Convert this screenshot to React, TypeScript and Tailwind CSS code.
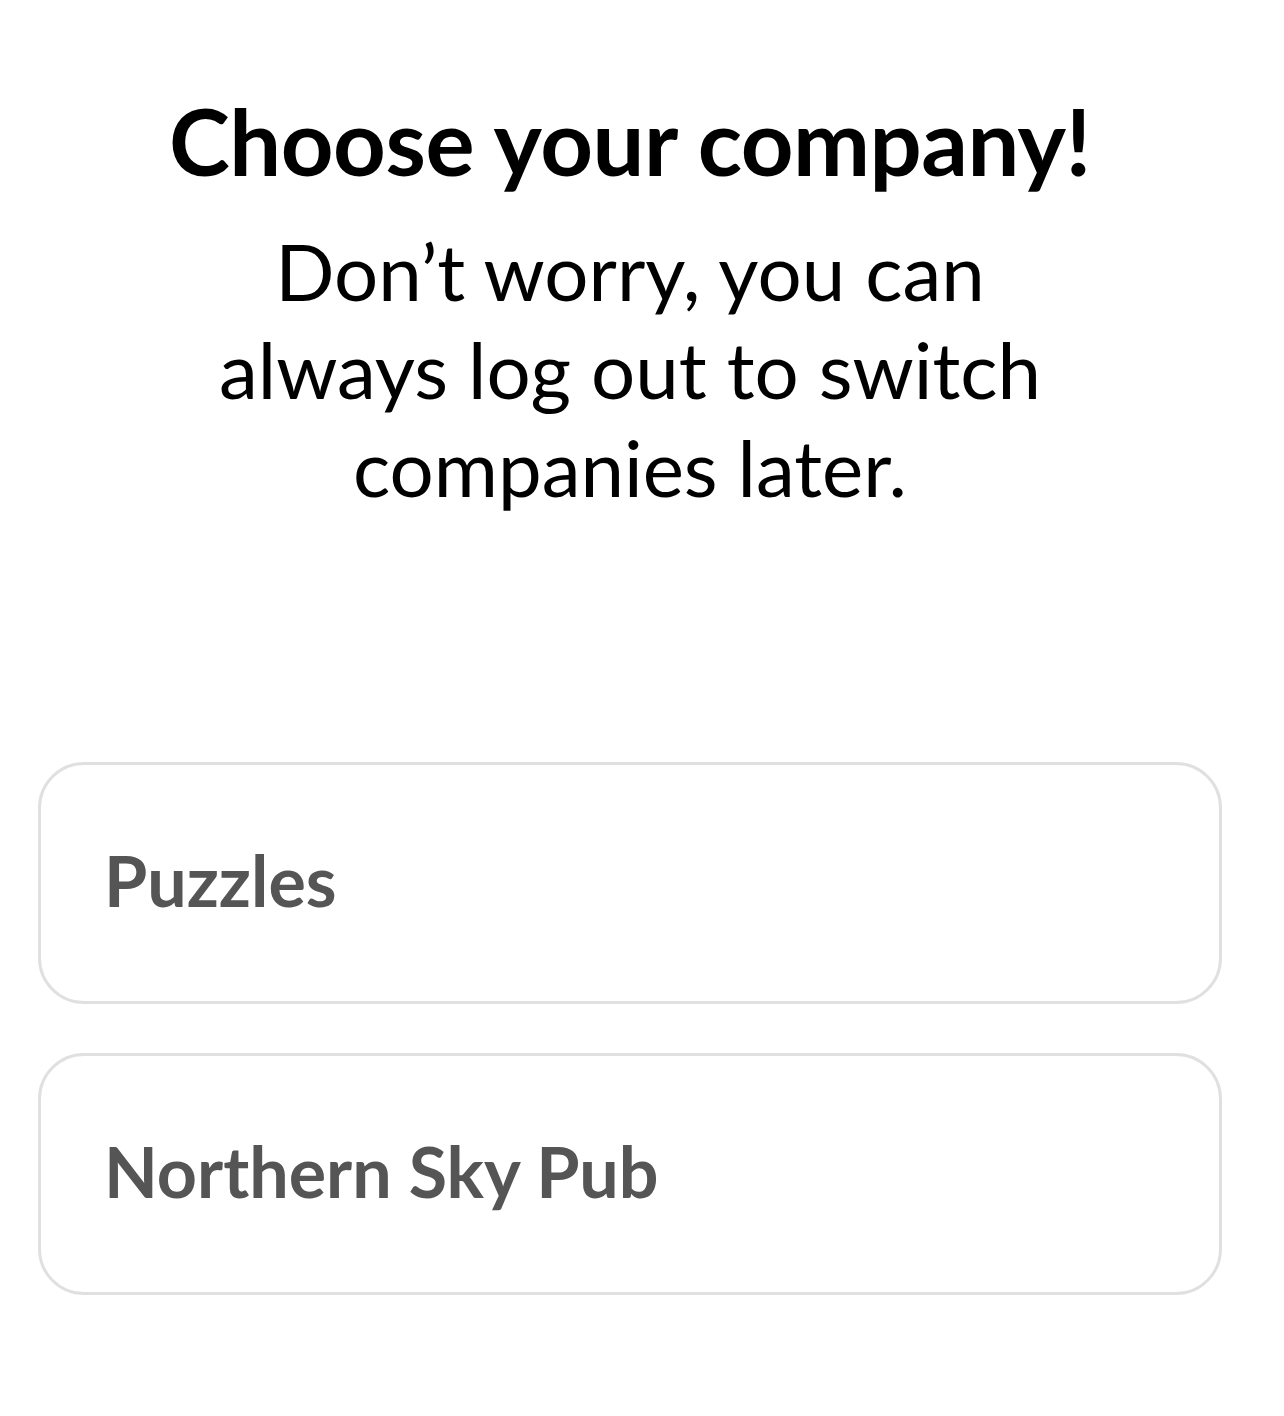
export default function App() {
  const companies = ['Puzzles', 'Northern Sky Pub'];

  return (
    <div className="min-h-[1416px] w-full bg-white font-['Lato','Liberation_Sans',sans-serif]">
      <div className="w-[1260px]">
        <div className="flex flex-col items-center px-[38px] pt-[91px]">
          <h1 className="text-[92px] font-bold leading-[100px] tracking-[-0.5px] text-black">
            Choose your company!
          </h1>
          <p className="mt-[31px] text-center text-[78px] leading-[98px] text-black">
            Don’t worry, you can
            <br />
            always log out to switch
            <br />
            companies later.
          </p>
        </div>

        {/* liste des entreprises */}
        <div className="mt-[246px] flex flex-col gap-[49px] px-[38px]">
          {companies.map((name) => (
            <button
              key={name}
              className="flex h-[242px] w-full items-center rounded-[46px] border-[3px] border-[#e0e0e0] bg-white px-[63px] pb-[6px] text-left"
            >
              <span className="text-[70px] font-bold text-[#555555]">{name}</span>
            </button>
          ))}
        </div>
      </div>
    </div>
  );
}
